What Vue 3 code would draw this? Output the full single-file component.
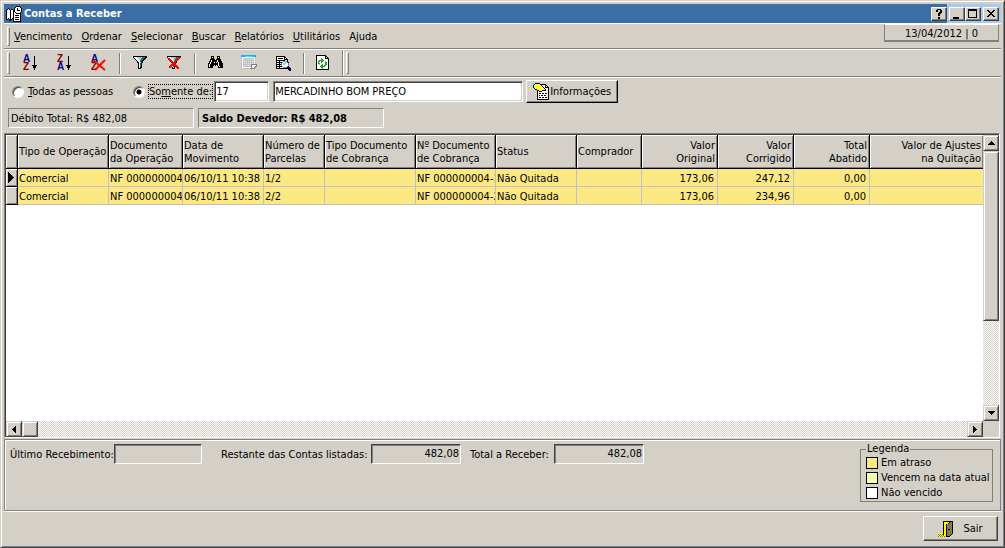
<script setup>
import { ref } from 'vue'

const scope = ref('only')
const personCode = ref('17')
const personName = ref('MERCADINHO BOM PREÇO')

const menus = [
  ['V', 'encimento'],
  ['O', 'rdenar'],
  ['S', 'elecionar'],
  ['B', 'uscar'],
  ['R', 'elatórios'],
  ['U', 'tilitários'],
  ['Aj', 'uda'],
]

const columns = [
  { key: 'type', lines: ['Tipo de Operação'], cls: 'c91' },
  { key: 'doc', lines: ['Documento', 'da Operação'], cls: 'c74' },
  { key: 'date', lines: ['Data de', 'Movimento'], cls: 'c81' },
  { key: 'part', lines: ['Número de', 'Parcelas'], cls: 'c61' },
  { key: 'billType', lines: ['Tipo Documento', 'de Cobrança'], cls: 'c91' },
  { key: 'billNo', lines: ['Nº Documento', 'de Cobrança'], cls: 'c80' },
  { key: 'status', lines: ['Status'], cls: 'c81' },
  { key: 'buyer', lines: ['Comprador'], cls: 'c65' },
  { key: 'original', lines: ['Valor', 'Original'], cls: 'c76', num: true },
  { key: 'fixed', lines: ['Valor', 'Corrigido'], cls: 'c76', num: true },
  { key: 'cut', lines: ['Total', 'Abatido'], cls: 'c76', num: true },
  { key: 'adjust', lines: ['Valor de Ajustes', 'na Quitação'], cls: 'rest', num: true },
]

const rows = [
  { type: 'Comercial', doc: 'NF 000000004', date: '06/10/11 10:38', part: '1/2', billNo: 'NF 000000004-1', status: 'Não Quitada', original: '173,06', fixed: '247,12', cut: '0,00' },
  { type: 'Comercial', doc: 'NF 000000004', date: '06/10/11 10:38', part: '2/2', billNo: 'NF 000000004-2', status: 'Não Quitada', original: '173,06', fixed: '234,96', cut: '0,00' },
]

const palette = {
  k: '#000000', w: '#ffffff', g: '#808080', s: '#c0c0c0', t: '#008080', r: '#ff0000',
  y: '#ffff00', p: '#ffffa0', c: '#00ffff', b: '#2aa5ee', n: '#000080', o: '#808000', v: '#22a022', l: '#a8d020', e: '#e8ecf0',
}

const icons = {
  app: [
    '..........kkkk..',
    '.........kwwwwk.',
    '..k.....kwwkwwwk',
    '.kwk.kk.kwwkwwwk',
    'kwwwkwwkkwwkkkwk',
    'kwwwkwwkkwwwwwwk',
    'kwwwkwwkwkwwwwk.',
    'kwwwkwwkwwkkkkk.',
    'kwwwkwwkwwwwwwk.',
    'kwwwkwwkwkkkkwk.',
    'kwwwkwwkwwwwwwk.',
    'kwwwkwwkwkkkkwk.',
    'kwkwkwkkwwwwwwk.',
    'kk.kkk.kwkkkkwk.',
    '...kk..kwwwwwwk.',
    '.......kkkkkkkk.',
  ],
  filter: [
    'kkkkkkkkkkkkkk',
    'kwwwssssstttkk',
    '.kwwwssstttkk.',
    '..kwwwssttkk..',
    '...kwwwttkk...',
    '....kwwtkk....',
    '....kkwstk....',
    '.....kwtk.....',
    '.....kwtk.....',
    '.....kwtk.....',
    '.....kwtk.....',
    '.....kwkk.....',
    '.....kkk......',
  ],
  filterOff: [
    'kkkkkkkkkkkkkk..',
    'kwwwssssstttrr..',
    '.rrwwwssttrrr...',
    '.rrrwwsstrrr....',
    '..rrrwwtrrr.....',
    '...rrrwrrk......',
    '....krrrrk......',
    '.....rrrk.......',
    '....rrrrr.......',
    '...rrrtrrr......',
    '..rrrwtkrrr.....',
    '..rr.kwk.rrr....',
    '.....kkk..rr....',
  ],
  binoculars: [
    '...kkk...kkk...',
    '...kwk...kwk...',
    '...kkk...kkk...',
    '..kkkkk.kkkkk..',
    '..kwkkkkkwkkk..',
    '.kkwkkkkkwkkkk.',
    '.kwkkkwkwkwkkk.',
    'kkwkkkkkkkwkkkk',
    'kwkkkkkkkkwkkkk',
    'kwkkkk.k.kwkkkk',
    'kwkkk.....kwkkk',
    'kkkkk.....kkkkk',
  ],
  sheet: [
    'bbbbbbbbbbbbbbb.',
    'bbbbccccccccbbb.',
    'swwwwwwwwwwwwws.',
    'swsssssssssssws.',
    'swsesesesesesws.',
    'swsssssssssssws.',
    'swsesesesesesws.',
    'swsssssssssssws.',
    'swsesesesesesws.',
    'swssssssssgggggg',
    'swsesesesegwwwwg',
    'swssssssssgwwwgg',
    'swwwwwwwwwgwwgg.',
    'sssssssssggggg..',
  ],
  search: [
    'kkkkkkkkk.......',
    'kwwwwwwwkk......',
    'kwkkkkkwkwk.....',
    'kwwwwwwwkkkk....',
    'kkkkkkkkkwwk....',
    'kwwkwwwggggk....',
    'kkkkkkgwwwsgk...',
    'kwwkwgwsccwwg...',
    'kkkkkgwscwwwg...',
    'kwwkwgwwwwwwg...',
    'kkkkkkgwwwwgk...',
    'kwwkwwwggggnnk..',
    'kkkkkkkkkkkknnk.',
    '............knn.',
    '.............nn.',
  ],
  refresh: [
    'kkkkkkkkkk...',
    'kwwwwwwwwkk..',
    'kwwwwwwwwkwk.',
    'kwwwwvwwwkkkk',
    'kwwwwvvwwwwwk',
    'kwwvvvvvwwwwk',
    'kwvvwvvwwlwwk',
    'kwvwwvwwwvvwk',
    'kwvvwwwwwvvwk',
    'kwwlwwvwwvvwk',
    'kwwwwvvwvvwwk',
    'kwwwvvvvvwwwk',
    'kwwwwvvwwwwwk',
    'kwwwwwvwwwwwk',
    'kkkkkkkkkkkkk',
  ],
  info: [
    'cckkkkk.........',
    'ckyyyypkkkkkk...',
    'kyypyypykwwwkk..',
    'kypyyypypkwwkwk.',
    'kyypyyppypkwkkkk',
    '.kyyypyypypkwwwk',
    '..kkyypyypypkwwk',
    '....kkyypkkkkwwk',
    '....kwkkkwwwwwwk',
    '....kwwwwwwwwwwk',
    '....kwkkwkkwkkwk',
    '....kwwwwwwwwwwk',
    '....kwkwkkwkkwwk',
    '....kwwwwwwwwwwk',
    '....kwkkwkkwkkwk',
    '....kwwwwwwwwwwk',
    '....kkkkkkkkkkkk',
  ],
  door: [
    '.....kkkkkkkkkk.',
    '.....kyyyyykogk.',
    '.....kyyyykgogk.',
    '.....kyykgogogk.',
    '.....kyykogogok.',
    '.....kyykgogogk.',
    '.....kyykogogok.',
    '.....kyykgogogk.',
    '.....kyykokkgok.',
    '.....kyykgogogk.',
    '.....kyykogogok.',
    '.....kyykgogogk.',
    'yyyyykyykogogok.',
    'oyoyokyykgogok..',
    '.oyoyoyykogok...',
    'oyoyoyoykkkk....',
  ],
}

// Turns a character map into one path per colour.
function layers(name) {
  const found = {}
  icons[name].forEach((line, y) => {
    let x = 0
    while (x < line.length) {
      const ch = line[x]
      let end = x
      while (line[end] === ch) end++
      if (ch !== '.') found[ch] = (found[ch] || '') + `M${x} ${y}h${end - x}v1h-${end - x}z`
      x = end
    }
  })
  return Object.entries(found).map(([ch, d]) => ({ d, fill: palette[ch] }))
}
</script>

<template>
  <main class="window">
    <header class="title-bar">
      <svg class="px" width="16" height="16" viewBox="0 0 16 16" aria-hidden="true"><path v-for="l in layers('app')" :key="l.fill" :d="l.d" :fill="l.fill" /></svg>
      <h1>Contas a Receber</h1>
      <div class="caption-buttons">
        <button class="cap" type="button" aria-label="Ajuda"><svg class="px" width="12" height="10" viewBox="0 0 12 10"><path d="M4 0h4v1h1v3h-1v1h-1v2h-2v-3h1v-1h1v-2h-2v2h-2v-2h1zM5 8h2v2h-2z" /></svg></button>
        <button class="cap gap" type="button" aria-label="Minimizar"><svg class="px" width="12" height="10" viewBox="0 0 12 10"><path d="M2 8h6v2H2z" /></svg></button>
        <button class="cap" type="button" aria-label="Maximizar"><svg class="px" width="12" height="10" viewBox="0 0 12 10"><path fill-rule="evenodd" d="M1 0h9v9H1zM2 2v6h7v-6z" /></svg></button>
        <button class="cap gap" type="button" aria-label="Fechar"><svg class="px" width="12" height="10" viewBox="0 0 12 10"><path d="M2 1h2v1h1v1h2v-1h1v-1h2v1h-1v1h-1v1h-1v1h1v1h1v1h1v1h-2v-1h-1v-1h-2v1h-1v1h-2v-1h1v-1h1v-1h1v-1h-1v-1h-1v-1h-1z" /></svg></button>
      </div>
    </header>

    <nav class="menu-bar">
      <span class="grip"></span>
      <button v-for="m in menus" :key="m[1]" type="button" class="menu">
        <template v-if="m[0] === 'Aj'">A<u>j</u>uda</template>
        <template v-else><u>{{ m[0] }}</u>{{ m[1] }}</template>
      </button>
      <div class="date">13/04/2012 | 0</div>
    </nav>

    <div class="tool-bar">
      <span class="grip"></span>
      <button class="tool" type="button" aria-label="Ordem crescente">
        <svg width="16" height="18" viewBox="0 -1 16 18"><text x="0" y="7" fill="#000080">A</text><text x="0" y="15" fill="#800000">Z</text><path class="px" d="M11 1h1v9h2v1h-1v2h-1v2h-1v-2h-1v-2h-1v-1h2z" /></svg>
      </button>
      <button class="tool" type="button" aria-label="Ordem decrescente">
        <svg width="16" height="18" viewBox="0 -1 16 18"><text x="0" y="7" fill="#800000">Z</text><text x="0" y="15" fill="#000080">A</text><path class="px" d="M11 1h1v9h2v1h-1v2h-1v2h-1v-2h-1v-2h-1v-1h2z" /></svg>
      </button>
      <button class="tool" type="button" aria-label="Remover ordem">
        <svg width="16" height="18" viewBox="0 -1 16 18"><text x="0" y="7" fill="#000080">A</text><text x="0" y="15" fill="#800000">Z</text><path d="M2 5L14 15M14 5L4 15" stroke="#f01000" stroke-width="2" /></svg>
      </button>
      <span class="sep"></span>
      <button class="tool" type="button" aria-label="Filtrar"><svg class="px" width="16" height="16" viewBox="-1 -1 16 16"><path v-for="l in layers('filter')" :key="l.fill" :d="l.d" :fill="l.fill" /></svg></button>
      <button class="tool" type="button" aria-label="Remover filtro"><svg class="px" width="16" height="16" viewBox="-1 -1 16 16"><path v-for="l in layers('filterOff')" :key="l.fill" :d="l.d" :fill="l.fill" /></svg></button>
      <span class="sep"></span>
      <button class="tool" type="button" aria-label="Localizar"><svg class="px" width="16" height="16" viewBox="-1 -1 16 16"><path v-for="l in layers('binoculars')" :key="l.fill" :d="l.d" :fill="l.fill" /></svg></button>
      <button class="tool" type="button" aria-label="Planilha"><svg class="px" width="16" height="16" viewBox="0 0 16 16"><path v-for="l in layers('sheet')" :key="l.fill" :d="l.d" :fill="l.fill" /></svg></button>
      <button class="tool" type="button" aria-label="Visualizar"><svg class="px" width="16" height="16" viewBox="-1 -1 16 16"><path v-for="l in layers('search')" :key="l.fill" :d="l.d" :fill="l.fill" /></svg></button>
      <span class="sep"></span>
      <button class="tool" type="button" aria-label="Atualizar"><svg class="px" width="16" height="16" viewBox="0 0 16 16"><path v-for="l in layers('refresh')" :key="l.fill" :d="l.d" :fill="l.fill" /></svg></button>
      <span class="edge"></span>
      <span class="grip"></span>
    </div>

    <form class="filter-row" @submit.prevent>
      <label class="radio all"><input v-model="scope" type="radio" name="scope" value="all" /><span><u>T</u>odas as pessoas</span></label>
      <label class="radio"><input v-model="scope" type="radio" name="scope" value="only" /><span class="focus">So<u>m</u>ente de:</span></label>
      <input v-model="personCode" class="field code" type="text" aria-label="Código" />
      <input v-model="personName" class="field name" type="text" aria-label="Nome" />
      <button class="btn info" type="button"><svg class="px" width="16" height="17" viewBox="0 0 16 17" aria-hidden="true"><path v-for="l in layers('info')" :key="l.fill" :d="l.d" :fill="l.fill" /></svg>Informações</button>
    </form>

    <div class="totals">
      <div class="total">Débito Total: R$ 482,08</div>
      <div class="total strong">Saldo Devedor: R$ 482,08</div>
    </div>

    <section class="grid">
      <div class="sheet">
        <table>
          <colgroup><col class="mark" /><col v-for="c in columns" :key="c.key" :class="c.cls" /></colgroup>
          <thead>
            <tr><th></th><th v-for="c in columns" :key="c.key" :class="{ num: c.num }"><div v-for="t in c.lines" :key="t">{{ t }}</div></th></tr>
          </thead>
          <tbody>
            <tr v-for="(r, i) in rows" :key="i">
              <th><svg v-if="i === 0" class="px" width="6" height="11" viewBox="0 0 6 11"><path d="M0 0h1v1h1v1h1v1h1v1h1v1h1v1h-1v1h-1v1h-1v1h-1v1h-1v1h-1z" /></svg></th>
              <td v-for="c in columns" :key="c.key" :class="{ num: c.num }">{{ r[c.key] }}</td>
            </tr>
          </tbody>
        </table>
      </div>
      <div class="scroll vertical">
        <button class="arrow" type="button" aria-label="Acima"><svg class="px" width="7" height="4" viewBox="0 0 7 4"><path d="M3 0h1v1h1v1h1v1h1v1H0V3h1V2h1V1h1z" /></svg></button>
        <span class="thumb"></span>
        <button class="arrow end" type="button" aria-label="Abaixo"><svg class="px" width="7" height="4" viewBox="0 0 7 4"><path d="M0 0h7v1h-1v1h-1v1h-1v1h-1v-1h-1v-1h-1v-1h-1z" /></svg></button>
      </div>
      <div class="scroll horizontal">
        <button class="arrow" type="button" aria-label="Esquerda"><svg class="px" width="4" height="7" viewBox="0 0 4 7"><path d="M3 0h1v7h-1v-1h-1v-1h-1v-1h-1v-1h1v-1h1v-1h1z" /></svg></button>
        <span class="thumb"></span>
        <button class="arrow end" type="button" aria-label="Direita"><svg class="px" width="4" height="7" viewBox="0 0 4 7"><path d="M0 0h1v1h1v1h1v1h1v1h-1v1h-1v1h-1v1h-1z" /></svg></button>
      </div>
    </section>

    <section class="summary">
      <label class="sum first"><span>Último Recebimento:</span><input type="text" readonly value="" /></label>
      <label class="sum second"><span>Restante das Contas listadas:</span><input type="text" readonly value="482,08" /></label>
      <label class="sum third"><span>Total a Receber:</span><input type="text" readonly value="482,08" /></label>
      <fieldset class="legend">
        <legend>Legenda</legend>
        <div><i class="late"></i>Em atraso</div>
        <div><i class="today"></i>Vencem na data atual</div>
        <div><i class="open"></i>Não vencido</div>
      </fieldset>
    </section>

    <footer class="foot">
      <button class="btn exit" type="button"><svg class="px" width="16" height="16" viewBox="0 0 16 16" aria-hidden="true"><path v-for="l in layers('door')" :key="l.fill" :d="l.d" :fill="l.fill" /></svg>Sair</button>
    </footer>
  </main>
</template>

<style>
html, body { margin: 0; background: #d4d0c8; }
</style>

<style scoped>
* { box-sizing: border-box; }
.window {
  display: flex;
  flex-direction: column;
  min-height: 100vh;
  padding: 2px 2px 4px 2px;
  border: 1px solid #404040;
  border-top-color: #d4d0c8;
  border-left-color: #d4d0c8;
  box-shadow: inset 1px 1px #fff, inset -1px -1px #808080;
  background: #d4d0c8;
  color: #000;
  font: 11px/13px Tahoma, "DejaVu Sans Condensed", "Noto Sans", sans-serif;
}
button, input { font: inherit; color: inherit; margin: 0; padding: 0; border-radius: 0; }
svg { display: block; flex: none; }
.px { shape-rendering: crispEdges; }
u { text-decoration: underline; text-underline-offset: 1px; }

.title-bar {
  display: flex;
  align-items: center;
  height: 19px;
  margin: 1px 1px 0;
  padding-left: 2px;
  background: linear-gradient(to right, #3a6ea5 calc(100% - 54px), #a6caf0 calc(100% - 54px));
}
h1 { flex: 1; margin: 0 0 0 2px; color: #fff; font-size: 11px; font-weight: bold; line-height: 14px; }
.caption-buttons { display: flex; padding-right: 2px; }
.cap, .arrow, .thumb {
  display: flex;
  align-items: center;
  justify-content: center;
  width: 16px;
  height: 14px;
  border: 1px solid #404040;
  border-top-color: #fff;
  border-left-color: #fff;
  box-shadow: inset -1px -1px #808080;
  background: #d4d0c8;
}
.cap.gap { margin-left: 2px; }

.menu-bar {
  display: flex;
  align-items: center;
  height: 26px;
  margin: 0 1px;
  padding-left: 3px;
  border-top: 1px solid #fff;
  border-bottom: 1px solid #808080;
}
.grip { width: 3px; height: 19px; border: 1px solid #808080; border-top-color: #fff; border-left-color: #fff; }
.menu { margin-left: 1px; padding: 0 4px; border: 0; background: none; }
.grip + .menu { margin-left: 0; }
.date {
  width: 115px;
  height: 18px;
  margin: 0 2px 6px auto;
  border: 1px solid #fff;
  border-left-color: #808080;
  border-bottom: 2px solid #808080;
  border-right-color: #808080;
  line-height: 17px;
  text-align: center;
}

.tool-bar {
  display: flex;
  align-items: center;
  height: 28px;
  margin: 0 1px;
  padding-left: 3px;
  border-top: 1px solid #fff;
  border-bottom: 1px solid #808080;
}
.tool-bar .grip { height: 22px; }
.tool {
  display: flex;
  align-items: center;
  justify-content: center;
  width: 34px;
  height: 24px;
  border: 0;
  background: none;
}
.tool text { font: bold 10px "Liberation Sans", sans-serif; }
.grip + .tool { margin-left: 4px; }
.sep { width: 2px; height: 21px; margin: 0 2px 0 3px; border-left: 1px solid #808080; border-right: 1px solid #fff; }
.edge { width: 2px; height: 26px; margin: 0 2px 0 1px; border-left: 1px solid #808080; border-right: 1px solid #fff; }

.filter-row {
  display: flex;
  align-items: center;
  height: 29px;
  margin: 0 1px;
  padding: 0 0 1px 8px;
  border-top: 1px solid #fff;
}
.radio { display: flex; align-items: center; gap: 3px; }
.radio.all { width: 121px; }
.radio input {
  appearance: none;
  width: 12px;
  height: 12px;
  border: 1px solid #808080;
  border-right-color: #fff;
  border-bottom-color: #fff;
  border-radius: 50%;
  background: #fff;
  box-shadow: inset 1px 1px #404040;
}
.radio input:checked { background: radial-gradient(circle at center, #000 2px, #fff 3px); }
.radio span { padding: 1px; white-space: nowrap; }
.radio .focus { outline: 1px dotted #000; outline-offset: -1px; }
.field {
  height: 21px;
  padding: 0 1px 1px;
  border: 1px solid #fff;
  border-top-color: #808080;
  border-left-color: #808080;
  box-shadow: inset 1px 1px #404040, inset -1px -1px #d4d0c8;
  background: #fff;
}
.code { width: 55px; margin-left: 1px; }
.name { width: 250px; margin-left: 4px; }
.btn {
  display: flex;
  align-items: center;
  justify-content: center;
  border: 1px solid #404040;
  border-top-color: #fff;
  border-left-color: #fff;
  box-shadow: inset -1px -1px #808080;
  background: #d4d0c8;
}
.info { gap: 1px; width: 92px; height: 23px; margin-left: 3px; border-right-color: #000; border-bottom-color: #000; }

.totals { display: flex; gap: 4px; margin: 2px 5px 5px; }
.total {
  width: 186px;
  height: 20px;
  padding: 3px 2px;
  border: 1px solid #fff;
  border-top-color: #808080;
  border-left-color: #808080;
}
.strong { padding-left: 3px; font-weight: bold; }

.grid {
  flex: 1;
  display: grid;
  grid-template-columns: minmax(0, 1fr) 16px;
  grid-template-rows: minmax(0, 1fr) 16px;
  margin: 0 2px 0 1px;
  border: 1px solid #fff;
  border-top-color: #808080;
  border-left-color: #808080;
  box-shadow: inset 1px 1px #404040;
  padding: 1px 0 0 1px;
}
.sheet { overflow: hidden; background: #fff; }
table { width: 100%; table-layout: fixed; border-collapse: separate; border-spacing: 0; }
.mark { width: 12px; }
.c74 { width: 74px; }
.c61 { width: 61px; }
.c91 { width: 91px; }
.c80 { width: 80px; }
.c81 { width: 81px; }
.c65 { width: 65px; }
.c76 { width: 76px; }
th, td { padding: 0 1px; overflow: hidden; text-align: left; font-weight: normal; white-space: nowrap; }
thead th {
  height: 34px;
  border-right: 1px solid #000;
  border-bottom: 1px solid #000;
  box-shadow: inset 1px 1px #fff, inset -1px -1px #808080;
  background: #d4d0c8;
}
thead th:last-child { border-right: 0; }
tbody th {
  height: 18px;
  padding-left: 2px;
  border-right: 1px solid #000;
  border-bottom: 1px solid #000;
  box-shadow: inset 1px 1px #fff, inset -1px -1px #808080;
  background: #d4d0c8;
}
td {
  height: 18px;
  padding-top: 1px;
  border-right: 1px solid #c0c0c0;
  border-bottom: 1px solid #c0c0c0;
  background: #fce883;
}
td:last-child { border-right: 0; }
thead .num { padding-right: 2px; text-align: right; }
td.num { padding-right: 3px; text-align: right; }

.scroll { display: flex; background: repeating-conic-gradient(#fff 0 25%, #d4d0c8 0 50%) 0 0 / 2px 2px; }
.vertical { flex-direction: column; }
.arrow, .thumb { flex: none; width: 16px; height: 16px; border-top-color: #d4d0c8; border-left-color: #d4d0c8; box-shadow: inset 1px 1px #fff, inset -1px -1px #808080; }
.vertical .thumb { height: 60%; max-height: 170px; }
.vertical .end { margin-top: auto; }
.horizontal .end { margin-left: auto; }

.summary {
  display: flex;
  align-items: flex-start;
  height: 72px;
  margin: 1px 1px 0;
  padding: 4px 5px;
  border: 1px solid #808080;
  box-shadow: inset 1px 1px #fff, 0 1px #fff;
}
.sum { display: flex; align-items: center; justify-content: space-between; white-space: nowrap; }
.first { width: 192px; }
.second { width: 240px; margin-left: 19px; }
.third { width: 174px; margin-left: 9px; }
.sum input {
  width: 90px;
  min-width: 0;
  height: 20px;
  padding: 0 1px 2px;
  border: 1px solid #fff;
  border-top-color: #404040;
  border-left-color: #404040;
  box-shadow: inset 1px 1px #808080;
  background: #d4d0c8;
  text-align: right;
}
.legend {
  width: 133px;
  min-width: 0;
  margin: -1px 2px 0 auto;
  padding: 0 1px 1px 5px;
  border: 1px solid #808080;
}
.legend legend { height: 12px; padding: 0 1px; line-height: 12px; }
.legend div { display: flex; align-items: center; gap: 3px; height: 15px; white-space: nowrap; }
.legend i { flex: none; width: 12px; height: 12px; border: 1px solid #000; }
.late { background: #fce883; }
.today { background: #f5ffb0; }
.open { background: #fff; }

.foot { display: flex; justify-content: flex-end; padding: 5px 4px 2px; }
.exit { width: 75px; height: 25px; gap: 9px; }
</style>
